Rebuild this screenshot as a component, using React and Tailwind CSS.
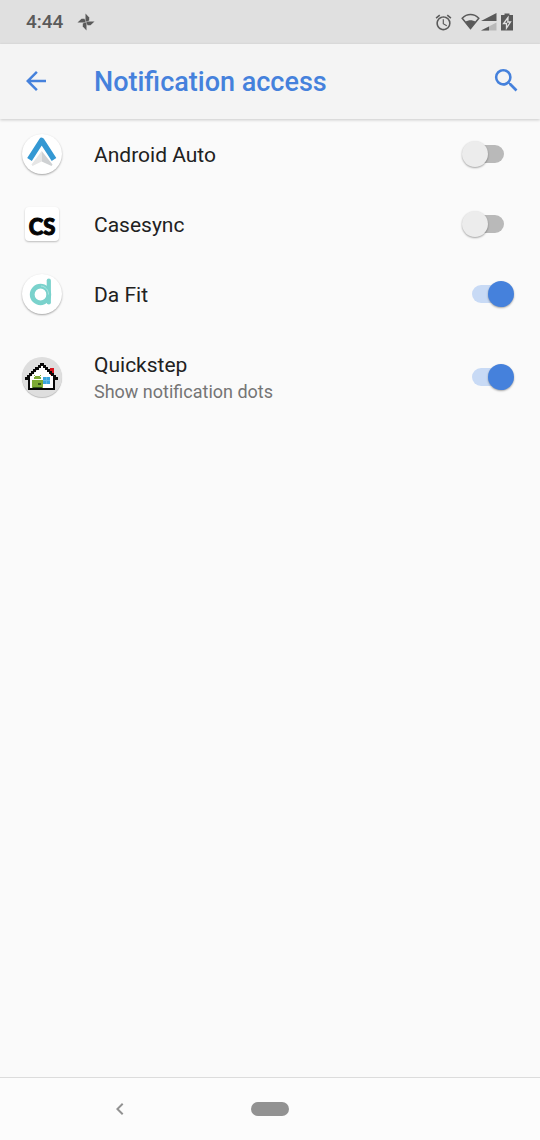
import React, {useState} from "react";
import {MdArrowBack, MdSearch, MdAlarm, MdChevronLeft} from "react-icons/md";

const AndroidAutoIcon = () => (
	<svg viewBox="0 0 40 40" className="size-10" aria-hidden="true">
		<path d="M19.700 17v10.500L10.500 32 9.500 30.500Z" fill="#e6e6e6" />
		<path d="M19.700 17v10.500L29.500 32l1-1.500Z" fill="#cfd1d3" />
		<path
			d="M7.500 25.500 19.700 6.500 32 25.500"
			fill="none"
			stroke="#3498d3"
			strokeWidth="5.500"
			strokeLinejoin="round"
		/>
	</svg>
);

const CasesyncIcon = () => (
	<svg viewBox="0 0 34 34" className="size-[34px]" aria-hidden="true">
		<text
			x="17"
			y="28"
			textAnchor="middle"
			fill="#050505"
			stroke="#050505"
			strokeWidth="1"
			className="font-[Lato,sans-serif] text-[22px] font-black"
		>
			CS
		</text>
	</svg>
);

const DaFitIcon = () => (
	<svg viewBox="0 0 40 40" className="size-10" aria-hidden="true">
		<g fill="none" stroke="#7ad2cc" strokeLinecap="round">
			<circle cx="18.500" cy="20.500" r="8.300" strokeWidth="4.800" />
			<path d="M26.800 6.500V28.500" strokeWidth="4.200" />
		</g>
		<path d="M19 12c4.500.5 7.500 4 7.500 8.500" fill="none" stroke="#b5e9e6" strokeWidth=".8" />
	</svg>
);

const QuickstepIcon = () => (
	<svg viewBox="0 0 40 40" className="size-10" shapeRendering="crispEdges" aria-hidden="true">
		<path d="M7 21 20 8l12 12v12H7Z" fill="#fff" />
		<path d="M28 11h4v7h-4Z" fill="#d5121c" />
		<path d="M12 18h1v1h-1ZM18 18h1v1h-1ZM13 19h5v1h-5ZM12 20h7v2h-7Z" fill="#7daa34" />
		<path d="M10 23h11v8H10Z" fill="#7daa34" />
		<path d="M16 26h3v2h-3ZM11 30h9v1h-9Z" fill="#35551a" />
		<path d="M21 20h7v7h-7Z" fill="#3aa5dc" />
		<path d="M24 20h1v7h-1ZM21 23h7v1h-7Z" fill="#62b9e6" />
		<path
			d="M18 6h4v2h2v2h2v2h2v2h2v2h2v2h2v2h2v3h-3v10H6V23H3v-3h2v-2h2v-2h2v-2h2v-2h2v-2h3V8h2ZM19 9v2h-2v2h-3v2h-2v2h-2v2H8v12h23V19h-2v-2h-2v-2h-2v-2h-2v-2h-2V9Z"
			fill="#080808"
			fillRule="evenodd"
		/>
	</svg>
);

const StatusBar = () => (
	<div className="flex h-11 items-center justify-between bg-[#e0e0e0] pl-[26px] pr-[27px] text-[#5a5a5a]">
		<div className="flex items-center gap-3.5">
			<span className="text-[19px] font-medium leading-6">4:44</span>
			<svg viewBox="0 0 18 18" className="size-[18px]" fill="currentColor" aria-label="Photos">
				<path d="M8.500 8.300V.5L12.200 4.500V7.500L9.500 8.500Z" />
				<path d="M8.500 8.300V.5L12.200 4.500V7.500L9.500 8.500Z" transform="rotate(90 9 9)" />
				<path d="M8.500 8.300V.5L12.200 4.500V7.500L9.500 8.500Z" transform="rotate(180 9 9)" />
				<path d="M8.500 8.300V.5L12.200 4.500V7.500L9.500 8.500Z" transform="rotate(270 9 9)" />
			</svg>
		</div>
		<div className="flex items-center">
			<MdAlarm className="mr-2 size-[19px]" />
			<svg viewBox="0 0 20 18" className="h-[18px] w-5" aria-label="Wi-Fi">
				<path
					d="M1.200 5.200C6 .3 13 .3 17.800 5.200L9.500 15.500Z"
					fill="none"
					stroke="currentColor"
					strokeWidth="1.500"
				/>
				<path d="M4.500 8.800C7.500 6.800 11.500 6.800 14.500 8.800L9.500 16Z" fill="currentColor" />
			</svg>
			<svg viewBox="0 0 16 18" className="h-[18px] w-4" aria-label="Signal">
				<path d="M15.500 0v8H0Z" fill="currentColor" />
				<path d="M15.500 9.500v8H0Z" fill="#b9b9b9" />
				<path d="M8 13.400v4.100H0Z" fill="currentColor" />
			</svg>
			<svg viewBox="0 0 12 18" className="ml-1 h-[18px] w-3" aria-label="Battery charging">
				<path d="M0 2h3.500V.5h5V2H12v15.500H0Z" fill="currentColor" />
				<path
					d="M7 4.500 2.500 10.500h3V15L9.500 9H6.800Z"
					fill="currentColor"
					stroke="#e0e0e0"
					strokeWidth="1.300"
				/>
			</svg>
		</div>
	</div>
);

const Toolbar = () => (
	<header className="relative flex h-[75px] items-center bg-[#f4f4f4] pb-0.5 pl-[21px] pr-[18px] text-[#4581dc] shadow-[0_1px_3px_rgba(0,0,0,0.2)]">
		<button type="button" aria-label="Back" className="mr-[43px]">
			<MdArrowBack className="size-[30px]" />
		</button>
		<h1 className="flex-1 pt-0.5 text-[27px] font-medium leading-8">Notification access</h1>
		<button type="button" aria-label="Search">
			<MdSearch className="size-[31px]" />
		</button>
	</header>
);

const initialApps = [
	{id: "auto", name: "Android Auto", icon: AndroidAutoIcon, shape: "round", enabled: false},
	{id: "casesync", name: "Casesync", icon: CasesyncIcon, shape: "square", enabled: false},
	{id: "dafit", name: "Da Fit", icon: DaFitIcon, shape: "round", enabled: true},
	{
		id: "quickstep",
		name: "Quickstep",
		summary: "Show notification dots",
		icon: QuickstepIcon,
		shape: "grey",
		enabled: true,
	},
];

const iconShapes = {
	round: "rounded-full bg-white shadow-[0_1px_2px_rgba(0,0,0,0.35)] size-10",
	square: "rounded-sm bg-white shadow-[0_1px_2px_rgba(0,0,0,0.25)] size-[34px]",
	grey: "rounded-full bg-[#dedede] shadow-[0_1px_1px_rgba(0,0,0,0.25)] size-10",
};

const AppRow = ({app, onToggle}) => {
	const Icon = app.icon;
	return (
		<li>
			<label
				htmlFor={app.id}
				className="flex cursor-pointer items-center py-5 pl-[22px] pr-[26px]"
			>
				<span className="mr-8 flex h-7 w-10 shrink-0 items-center justify-center">
					<span className={`shrink-0 ${iconShapes[app.shape]}`}>
						<Icon />
					</span>
				</span>
				<span className="flex flex-1 flex-col pt-0.5">
					<span className="text-[21px] leading-7 text-[#212121]">{app.name}</span>
					{app.summary && (
						<span className="text-[18px] leading-[26px] text-[#757575]">{app.summary}</span>
					)}
				</span>
				<input
					id={app.id}
					type="checkbox"
					role="switch"
					checked={app.enabled}
					onChange={() => onToggle(app.id)}
					className="relative h-[26px] w-[52px] cursor-pointer appearance-none before:absolute before:inset-x-[10px] before:inset-y-1 before:rounded-full before:bg-[#b9b9b9] after:absolute after:left-0 after:top-0 after:size-[26px] after:rounded-full after:bg-[#ececec] after:shadow-[0_1px_2px_rgba(0,0,0,0.35)] checked:before:bg-[#c8daf5] checked:after:left-[26px] checked:after:bg-[#4581dc]"
				/>
			</label>
		</li>
	);
};

const App = () => {
	const [apps, setApps] = useState(initialApps);

	const toggleApp = (id) => {
		setApps(apps.map((app) => (app.id === id ? {...app, enabled: !app.enabled} : app)));
	};

	return (
		<div className="flex min-h-screen flex-col bg-[#fafafa] font-[Roboto,sans-serif]">
			<StatusBar />
			<Toolbar />
			<main className="flex-1">
				<ul>
					{apps.map((app) => (
						<AppRow key={app.id} app={app} onToggle={toggleApp} />
					))}
				</ul>
			</main>
			<nav className="grid h-[63px] grid-cols-[1fr_auto_1fr] items-center border-t border-[#dcdcdc] bg-[#fcfcfc] text-[#929292]">
				<button type="button" aria-label="Back" className="mr-3 justify-self-center">
					<MdChevronLeft className="size-6" />
				</button>
				<button
					type="button"
					aria-label="Home"
					className="h-[14px] w-[38px] rounded-full bg-[#929292]"
				/>
			</nav>
		</div>
	);
};

export default App;
